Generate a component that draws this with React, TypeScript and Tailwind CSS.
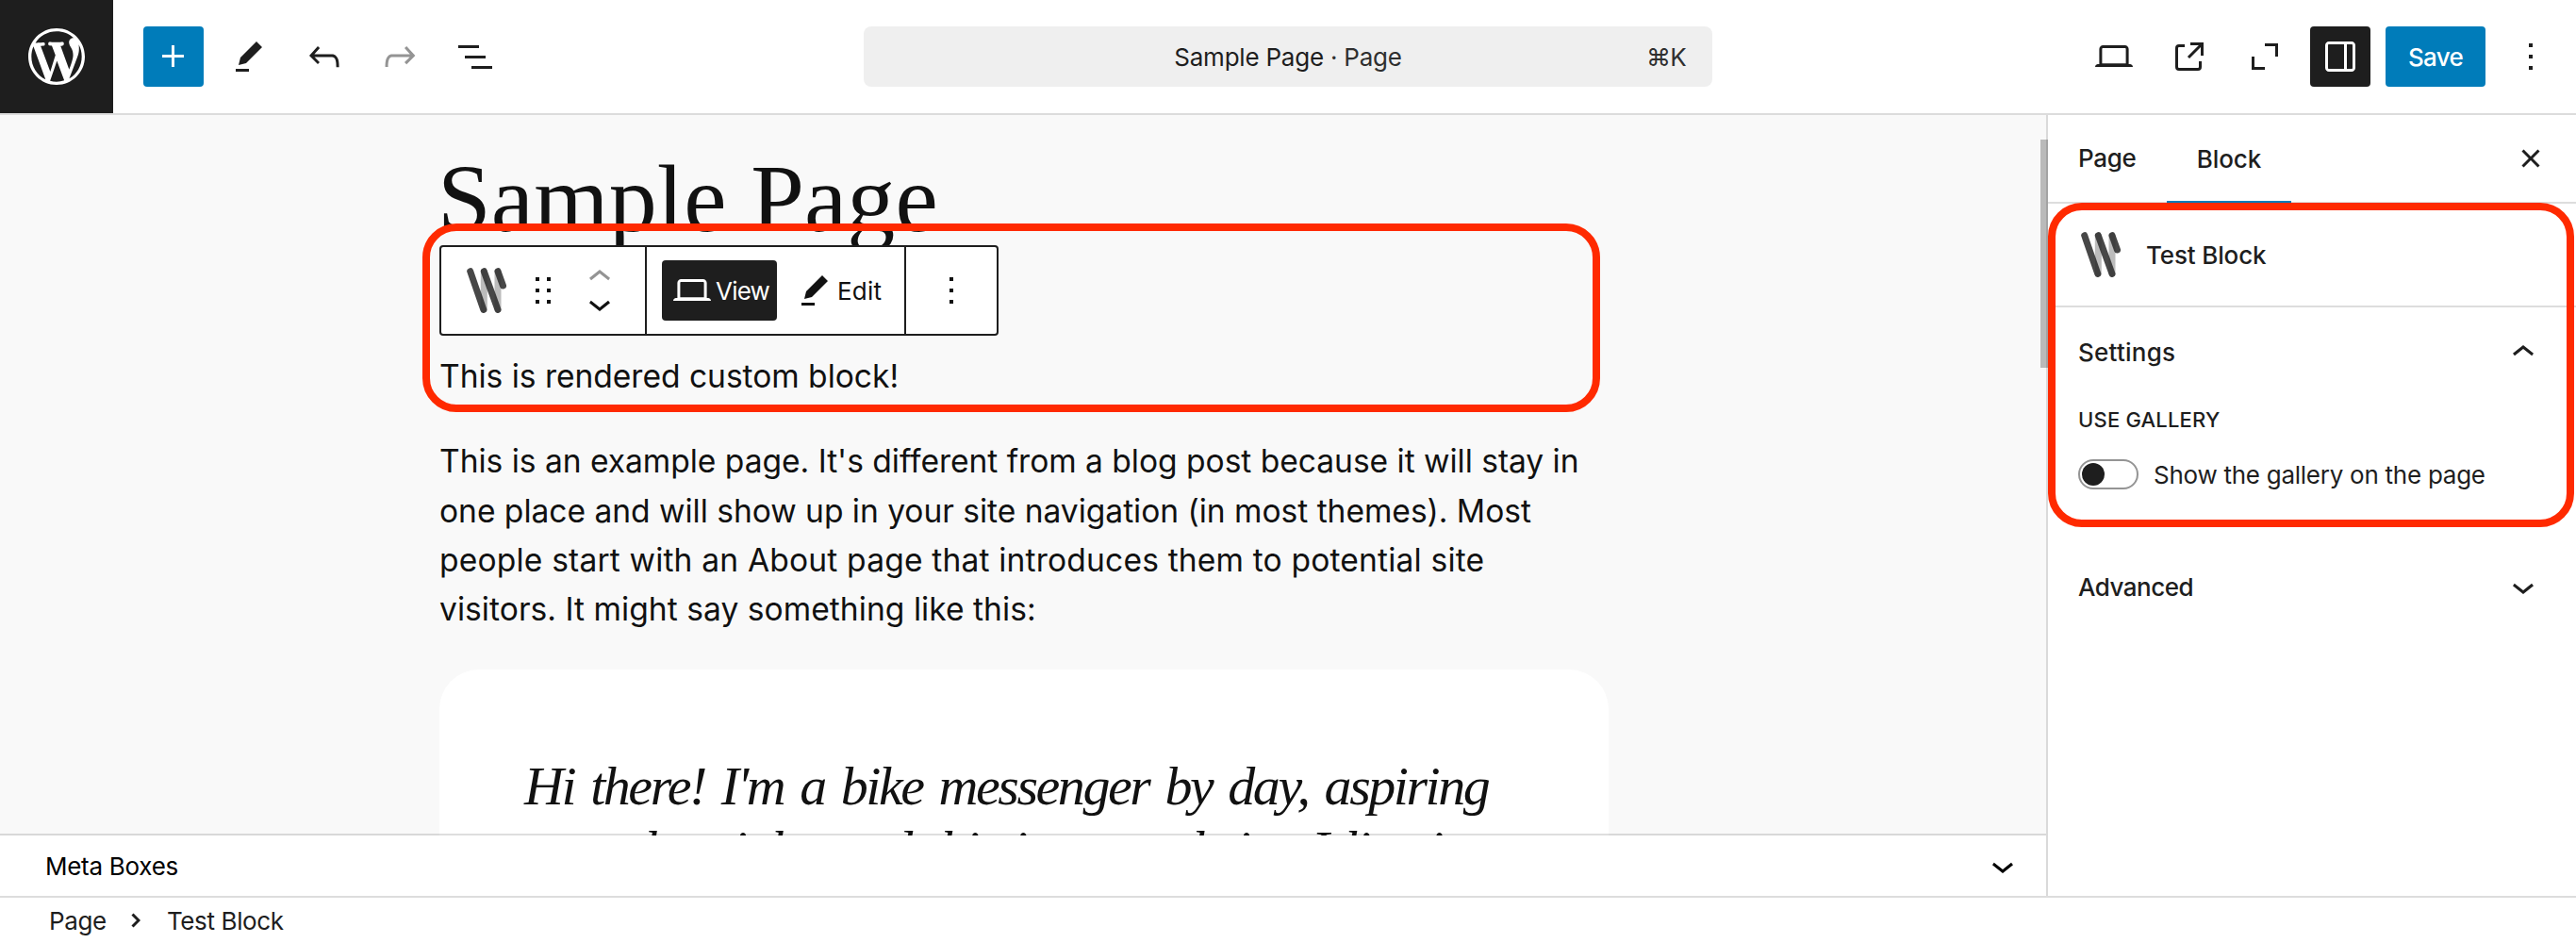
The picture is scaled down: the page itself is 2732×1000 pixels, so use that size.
import type { ReactNode } from "react";

const icons = {
  plus: "M11 12.5V17.5H12.5V12.5H17.5V11H12.5V6H11V11H6V12.5H11Z",
  edit: "m19 7-3-3-8.5 8.5-1 4 4-1L19 7Zm-7 11.5H5V20h7v-1.5Z",
  undo: "M18.3 11.7c-.6-.6-1.4-.9-2.3-.9H6.7l2.9-3.3-1.1-1-4.5 5L8.5 16l1-1-2.7-2.7H16c.5 0 .9.2 1.3.5 1 1 1 3.4 1 4.5v.3h1.5v-.2c0-1.5 0-4.3-1.5-5.7z",
  redo: "M15.6 6.5l-1.1 1 2.9 3.3H8c-.9 0-1.7.3-2.3.9-1.4 1.5-1.4 4.2-1.4 5.6v.2h1.5v-.3c0-1.1 0-3.5 1-4.5.3-.3.7-.5 1.3-.5h9.2L14.5 15l1.1 1.1 4.6-4.6-4.6-5z",
  list: "M3 6h11v1.5H3V6Zm3.5 5.5h11V13h-11v-1.5ZM21 17H10v1.5h11V17Z",
  desktop:
    "M20.5 16h-.7V8c0-1.1-.9-2-2-2H6.2c-1.1 0-2 .9-2 2v8h-.7c-.8 0-1.5.7-1.5 1.5h20c0-.8-.7-1.5-1.5-1.5zM5.7 8c0-.3.2-.5.5-.5h11.6c.3 0 .5.2.5.5v7.6H5.7V8z",
  external:
    "M19.5 4.5h-7V6h4.44l-5.97 5.97 1.06 1.06L18 7.06v4.44h1.5v-7Zm-13 1a2 2 0 0 0-2 2v10a2 2 0 0 0 2 2h10a2 2 0 0 0 2-2v-3H17v3a.5.5 0 0 1-.5.5h-10a.5.5 0 0 1-.5-.5v-10a.5.5 0 0 1 .5-.5h3V5.5h-3Z",
  expand: "M12 5h7v7h-1.5V6.5H12V5ZM5 12h1.5v5.5H12V19H5v-7Z",
  drawer:
    "M18 4H6c-1.1 0-2 .9-2 2v12c0 1.1.9 2 2 2h12c1.1 0 2-.9 2-2V6c0-1.1-.9-2-2-2zm-4 14.5H6c-.3 0-.5-.2-.5-.5V6c0-.3.2-.5.5-.5h8v13zm4.5-.5c0 .3-.2.5-.5.5h-2.5v-13H18c.3 0 .5.2.5.5v12z",
  more: "M13 19h-2v-2h2v2zm0-6h-2v-2h2v2zm0-6h-2V5h2v2z",
  close:
    "M12 13.06l3.712 3.713 1.061-1.06L13.061 12l3.712-3.712-1.06-1.06L12 10.938 8.288 7.227l-1.061 1.06L10.939 12l-3.712 3.712 1.06 1.061L12 13.061z",
  drag: "M8 7h2V5H8v2zm0 6h2v-2H8v2zm0 6h2v-2H8v2zm6-14v2h2V5h-2zm0 8h2v-2h-2v2zm0 6h2v-2h-2v2z",
  up: "M6.5 12.4L12 8l5.5 4.4-.9 1.2L12 10l-4.5 3.6-1-1.2z",
  down: "M17.5 11.6L12 16l-5.5-4.4.9-1.2L12 14l4.5-3.6 1 1.2z",
  wordpress:
    "M20 10c0-5.51-4.49-10-10-10C4.48 0 0 4.49 0 10c0 5.52 4.48 10 10 10 5.51 0 10-4.48 10-10zM7.78 15.37L4.37 6.22c.55-.02 1.17-.08 1.17-.08.5-.06.44-1.13-.06-1.11 0 0-1.45.11-2.37.11-.18 0-.37 0-.58-.01C4.12 2.69 6.87 1.11 10 1.11c2.33 0 4.45.87 6.05 2.34-.68-.11-1.65.39-1.65 1.58 0 .74.45 1.36.9 2.1.35.61.55 1.36.55 2.46 0 1.49-1.4 5-1.4 5l-3.03-8.37c.54-.02.82-.17.82-.17.5-.05.44-1.25-.06-1.22 0 0-1.44.12-2.38.12-.87 0-2.33-.12-2.33-.12-.5-.03-.56 1.2-.06 1.22l.92.08 1.26 3.41zM17.41 10c.24-.64.74-1.87.43-4.25.7 1.29 1.05 2.71 1.05 4.25 0 3.29-1.73 6.24-4.4 7.78.97-2.59 1.94-5.2 2.92-7.78zM6.1 18.09C3.12 16.65 1.11 13.53 1.11 10c0-1.3.23-2.48.72-3.59C3.25 10.3 4.67 14.2 6.1 18.09zm4.03-6.63l2.58 6.98c-.86.29-1.76.45-2.71.45-.79 0-1.57-.11-2.29-.33.81-2.38 1.62-4.74 2.42-7.1z",
};

function Icon({ name, className = "" }: { name: keyof typeof icons; className?: string }) {
  return (
    <svg viewBox="0 0 24 24" className={`size-12 shrink-0 fill-current ${className}`}>
      <path d={icons[name]} />
    </svg>
  );
}

function IconButton({ children, className = "" }: { children: ReactNode; className?: string }) {
  return <button className={`flex size-16 shrink-0 items-center justify-center rounded-[4px] ${className}`}>{children}</button>;
}

function BlockLogo() {
  return (
    <svg viewBox="0 0 43 48" className="h-12 w-[43px] shrink-0" fill="none" strokeLinecap="round" strokeWidth="7">
      <path d="M18.3 4V44M33 4V44" stroke="#bcbcbc" />
      <path d="M3.7 3.7 17.8 44.4M18.3 3.7 33 44.4M33 3.7 38.5 19" stroke="#2e2e2e" strokeOpacity=".88" />
    </svg>
  );
}

function Header() {
  return (
    <header className="flex h-[122px] shrink-0 items-start border-b-2 border-[#dcdcdc]">
      <div className="flex w-[916px] items-center">
        <div className="flex size-[120px] items-center justify-center bg-[#1e1e1e] text-white">
          <svg viewBox="0 0 20 20" className="size-[60px] fill-current">
            <path d={icons.wordpress} />
          </svg>
        </div>
        <div className="ml-8 flex gap-4">
          <IconButton className="bg-[#007cba] text-white"><Icon name="plus" /></IconButton>
          <IconButton><Icon name="edit" /></IconButton>
          <IconButton><Icon name="undo" /></IconButton>
          <IconButton className="text-[#949494]"><Icon name="redo" /></IconButton>
          <IconButton><Icon name="list" /></IconButton>
        </div>
      </div>
      <div className="mt-7 grid h-16 w-[900px] grid-cols-[1fr_auto_1fr] items-center rounded-lg bg-[#efefef] px-7 pt-[2px]">
        <span />
        <span className="tracking-[-0.22px]">
          Sample Page <span className="text-[#2f2f2f]">· Page</span>
        </span>
        <span className="text-right tracking-[-0.8px] text-[#2f2f2f]">⌘K</span>
      </div>
      <div className="mt-7 flex flex-1 justify-end gap-4 pr-4">
        <IconButton><Icon name="desktop" /></IconButton>
        <IconButton><Icon name="external" /></IconButton>
        <IconButton><Icon name="expand" /></IconButton>
        <IconButton className="bg-[#1e1e1e] text-white"><Icon name="drawer" /></IconButton>
        <button className="h-16 w-[106px] rounded-[4px] bg-[#007cba] pt-[2px] font-medium tracking-[-0.7px] text-white">Save</button>
        <IconButton><Icon name="more" /></IconButton>
      </div>
    </header>
  );
}

function BlockToolbar() {
  return (
    <div className="absolute left-[466px] top-[138px] flex h-24 w-[593px] rounded-[4px] border-2 border-[#1e1e1e] bg-white">
      <div className="flex w-[218px] items-center border-r-2 border-[#1e1e1e] pl-[27px]">
        <BlockLogo />
        <Icon name="drag" className="ml-[14px]" />
        <div className="ml-3 flex flex-col">
          <Icon name="up" className="-mb-5 text-[#949494]" />
          <Icon name="down" />
        </div>
      </div>
      <div className="flex w-[275px] items-center gap-2 border-r-2 border-[#1e1e1e] pl-4">
        <button className="flex h-16 w-[122px] items-center rounded-[4px] bg-[#1e1e1e] pl-2 tracking-[-0.8px] text-white">
          <Icon name="desktop" />
          <span className="ml-px mt-[2px]">View</span>
        </button>
        <button className="flex h-16 items-center pl-2 tracking-[0.2px]">
          <Icon name="edit" />
          <span className="mt-[2px]">Edit</span>
        </button>
      </div>
      <div className="flex flex-1 items-center justify-center">
        <Icon name="more" />
      </div>
    </div>
  );
}

function Canvas() {
  return (
    <div className="relative h-[764px] shrink-0">
      <main className="relative h-full overflow-hidden bg-[#f9f9f9] pl-[466px] pt-[30px] text-[#111]">
        <h1 className="font-['Liberation_Serif',serif] text-[102px] leading-[118px] tracking-[0.1px]">
          <span className="-ml-[2px]">Sample Page</span>
        </h1>
        <div className="mt-[103px] w-[1240px] text-[33.6px] leading-[52.3px] tracking-[-0.03px]">
          <p>This is rendered custom block!</p>
          <p className="mt-[38px] pr-4">
            This is an example page. It's different from a blog post because it will stay in one place and will show up in your site navigation (in
            most themes). Most{" "}
            <span className="tracking-[0.17px]">people start with an About page that introduces them to potential site</span>{" "}
            <span className="tracking-[0.04px]">visitors. It might say something like this:</span>
          </p>
        </div>
        <blockquote className="mt-[38px] h-[400px] w-[1240px] rounded-t-[42px] bg-white pl-[90px] pt-[87px] font-['Liberation_Serif',serif] text-[58px] italic leading-[73px]">
          <p className="whitespace-nowrap tracking-[-2.45px] [word-spacing:5px]">Hi there! I'm a bike messenger by day, aspiring</p>
          <p className="-mt-[5px] whitespace-nowrap tracking-[-2.45px] [word-spacing:5px]">actor by night, and this is my website. I live in</p>
        </blockquote>
        <BlockToolbar />
        <div className="absolute left-[448px] top-[115px] h-[200px] w-[1249px] rounded-[36px] border-8 border-[#ff2a00]" />
      </main>
      <div className="absolute inset-x-0 bottom-0 h-[2px] bg-black/13" />
      <div className="absolute -right-[2px] top-[26px] z-10 h-[242px] w-2 bg-black/25" />
    </div>
  );
}

function Sidebar() {
  return (
    <aside className="relative w-[562px] shrink-0 border-l-2 border-[#dadada]">
      <div className="flex h-[94px] items-stretch border-b-2 border-[#ddd] font-medium">
        <button className="w-[126px] pl-8 text-left tracking-[-0.3px]">Page</button>
        <button className="-mb-[2px] h-[94px] w-[132px] border-b-[3px] border-[#007cba] pt-[2px] tracking-[-0.1px]">Block</button>
        <button className="ml-auto mr-6 flex items-center">
          <Icon name="close" />
        </button>
      </div>
      <div className="flex h-[110px] items-center border-b-2 border-[#ddd] pl-[35px] font-medium tracking-[-0.15px]">
        <BlockLogo />
        <span className="ml-[26px] mt-[2px]">Test Block</span>
      </div>
      <div className="pl-8 pr-8">
        <div className="flex h-[95px] items-center justify-between font-medium">
          <span className="tracking-[0.25px]">Settings</span>
          <Icon name="up" />
        </div>
        <div className="mt-[8px] text-[22px] font-medium leading-8 tracking-[0.2px]">USE GALLERY</div>
        <div className="mt-[26px] flex h-8 items-center">
          <span className="flex h-8 w-16 items-center rounded-full border-2 border-[#949494] pl-[2px]">
            <span className="size-6 rounded-full bg-[#1e1e1e]" />
          </span>
          <span className="ml-4 mt-[2px] tracking-[-0.26px]">Show the gallery on the page</span>
        </div>
        <div className="mt-[56px] flex h-24 items-center justify-between font-medium">
          <span className="tracking-[-0.5px]">Advanced</span>
          <Icon name="down" className="-mt-[2px]" />
        </div>
      </div>
      <div className="absolute left-0 top-[93px] h-[344px] w-[558px] rounded-[36px] border-8 border-[#ff2a00]" />
    </aside>
  );
}

export default function App() {
  return (
    <div className="flex h-[1000px] w-[2732px] flex-col overflow-hidden bg-white font-['Inter',sans-serif] text-[26px] leading-8 text-[#1e1e1e]">
      <Header />
      <div className="flex h-[828px] shrink-0">
        <div className="flex w-[2170px] shrink-0 flex-col">
          <Canvas />
          <div className="flex h-16 items-center justify-between pl-12 pr-[22px] tracking-[-0.27px] text-black">
            <span className="mt-[2px]">Meta Boxes</span>
            <Icon name="down" />
          </div>
        </div>
        <Sidebar />
      </div>
      <footer className="flex h-[50px] shrink-0 items-center border-t-2 border-[#ddd] pl-[52px] tracking-[-0.36px]">
        <span className="mt-px">Page</span>
        <svg viewBox="0 0 10 16" className="ml-[26px] h-4 w-[10px]" fill="none" stroke="currentColor" strokeWidth="3">
          <path d="M1.5 1.5 8 8l-6.5 6.5" />
        </svg>
        <span className="ml-[28px] mt-px">Test Block</span>
      </footer>
    </div>
  );
}
